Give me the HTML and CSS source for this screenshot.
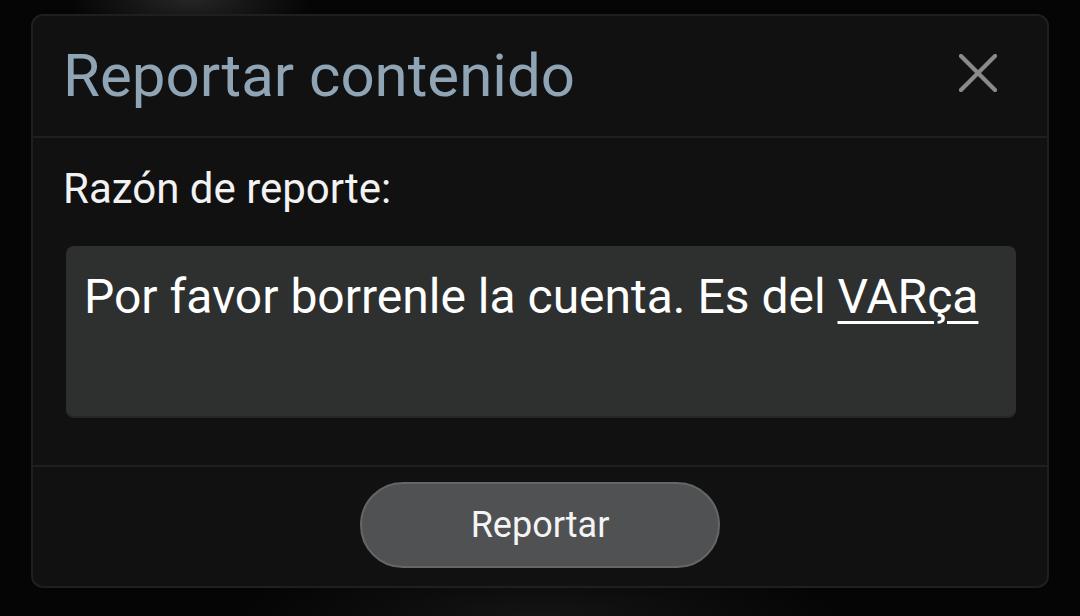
FILE: index.html
```html
<!DOCTYPE html>
<html lang="es">
<head>
<meta charset="utf-8">
<title>Reportar contenido</title>
<link rel="stylesheet" href="styles.css">
</head>
<body>
<div class="backdrop">
  <div class="dialog">
    <div class="dialog-header">
      <h1 class="dialog-title">Reportar contenido</h1>
      <button class="close-btn" aria-label="Cerrar">
        <svg viewBox="0 0 38 38" width="38" height="38">
          <path d="M2 2 L36 36 M36 2 L2 36" stroke="#8a8a8a" stroke-width="4.2" stroke-linecap="square" fill="none"/>
        </svg>
      </button>
    </div>
    <div class="dialog-body">
      <label class="field-label">Razón de reporte:</label>
      <div class="textarea">Por favor borrenle la cuenta. Es del <span class="spell">VARça</span></div>
    </div>
    <div class="dialog-footer">
      <button class="report-btn">Reportar</button>
    </div>
  </div>
</div>
</body>
</html>
```

FILE: styles.css
```css
html, body {
  margin: 0;
  padding: 0;
  width: 1080px;
  height: 616px;
  overflow: hidden;
  background: #050505;
  font-family: Roboto, "Noto Sans", "Liberation Sans", sans-serif;
}

.backdrop {
  width: 1080px;
  height: 616px;
  background:
    radial-gradient(ellipse 120px 40px at 190px 0px, rgba(70,70,70,0.5), transparent),
    radial-gradient(ellipse 300px 60px at 540px 616px, rgba(30,30,30,0.6), transparent),
    #050505;
  padding: 14px 0 0 31px;
  box-sizing: border-box;
}

.dialog {
  width: 1018px;
  height: 574px;
  box-sizing: border-box;
  border: 2px solid #1f1f1f;
  border-radius: 12px;
  background: #111111;
  display: flex;
  flex-direction: column;
}

.dialog-header {
  height: 122px;
  box-sizing: border-box;
  border-bottom: 2px solid #1f1f1f;
  display: flex;
  align-items: flex-start;
  justify-content: space-between;
  padding: 30px 50px 0 30px;
}

.dialog-title {
  margin: 0;
  font-weight: 400;
  font-size: 60px;
  line-height: 60px;
  color: #8fa4b4;
  letter-spacing: 0;
}

.close-btn {
  background: none;
  border: 0;
  padding: 0;
  margin-top: 8px;
  width: 38px;
  height: 38px;
  display: flex;
}

.dialog-body {
  height: 329px;
  box-sizing: border-box;
  border-bottom: 2px solid #1f1f1f;
  padding: 29px 31px 0 33px;
  display: flex;
  flex-direction: column;
}

.field-label {
  font-size: 42px;
  line-height: 44px;
  color: #f2f2f2;
  margin: 0 0 35px -3px;
}

.textarea {
  height: 172px;
  box-sizing: border-box;
  background: #2e2f2f;
  border-radius: 8px;
  border-bottom: 2px solid #262727;
  padding: 22px 18px 0 18px;
  font-size: 48px;
  line-height: 58px;
  color: #ffffff;
}

.spell {
  text-decoration: underline;
  text-decoration-thickness: 3px;
  text-underline-offset: 8px;
}

.dialog-footer {
  flex: 1;
  display: flex;
  align-items: center;
  justify-content: center;
}

.report-btn {
  width: 360px;
  height: 86px;
  box-sizing: border-box;
  border-radius: 43px;
  border: 2px solid #656667;
  background: #505153;
  color: #f4f4f4;
  font-family: Roboto, "Noto Sans", "Liberation Sans", sans-serif;
  font-size: 36px;
  margin-top: -3px;
}
```
